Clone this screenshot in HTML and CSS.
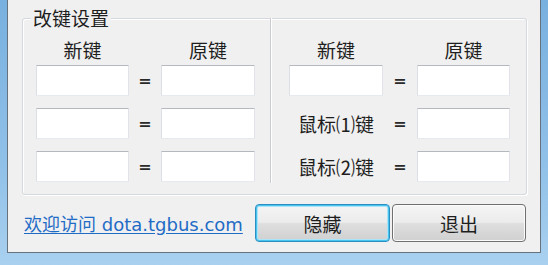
FILE: index.html
```html
<!DOCTYPE html>
<html lang="zh-CN">
<head>
<meta charset="utf-8">
<title>改键设置</title>
<link rel="stylesheet" href="styles.css">
</head>
<body>
<div class="window">
  <fieldset class="group">
    <legend class="group-title">改键设置</legend>
    <div class="group-body">
      <div class="keymap keymap-left">
        <div class="col-head">新键</div>
        <div></div>
        <div class="col-head">原键</div>
        <input class="keybox" type="text"><span class="eq">=</span><input class="keybox" type="text">
        <input class="keybox" type="text"><span class="eq">=</span><input class="keybox" type="text">
        <input class="keybox" type="text"><span class="eq">=</span><input class="keybox" type="text">
      </div>
      <div class="divider"></div>
      <div class="keymap keymap-right">
        <div class="col-head">新键</div>
        <div></div>
        <div class="col-head">原键</div>
        <input class="keybox" type="text"><span class="eq">=</span><input class="keybox" type="text">
        <div class="mouse-label">鼠标⑴键</div><span class="eq">=</span><input class="keybox" type="text">
        <div class="mouse-label">鼠标⑵键</div><span class="eq">=</span><input class="keybox" type="text">
      </div>
    </div>
  </fieldset>
  <div class="footer">
    <a class="site-link" href="#">欢迎访问 dota.tgbus.com</a>
    <div class="buttons">
      <button class="btn btn-default" type="button">隐藏</button>
      <button class="btn" type="button">退出</button>
    </div>
  </div>
</div>
</body>
</html>
```

FILE: styles.css
```css
html, body {
  margin: 0;
  padding: 0;
}
body {
  width: 548px;
  height: 265px;
  overflow: hidden;
  background: linear-gradient(180deg, #78b0df 0%, #8fc0e8 60%, #a9d0ef 100%);
  font-family: "Noto Sans CJK SC", "Noto Sans", sans-serif;
  color: #1e1e1e;
}
.window {
  box-sizing: border-box;
  margin-left: 7px;
  width: 534px;
  height: 253px;
  background: #f0f0f0;
  border: 1px solid #66727e;
  border-top: none;
  padding: 7px 13px 0 14px;
  display: flex;
  flex-direction: column;
}
.group {
  box-sizing: border-box;
  margin: 0;
  padding: 0;
  height: 188px;
  border: 1px solid #d3d9de;
  border-radius: 3px;
  box-shadow: inset 1px 1px 0 #ffffff, 1px 1px 0 #ffffff;
}
.group-title {
  margin-left: 8px;
  padding: 0 2px;
  font-size: 19px;
  line-height: 22px;
  background: #f0f0f0;
}
.group-body {
  display: flex;
  padding: 2px 0 0 13px;
}
.keymap {
  display: grid;
  grid-template-rows: 22px 31px 31px 31px;
  row-gap: 12px;
  align-items: center;
}
.keymap-left {
  grid-template-columns: 93px 32px 94px;
}
.keymap-right {
  grid-template-columns: 94px 34px 93px;
}
.col-head {
  align-self: end;
  margin-bottom: -8px;
  font-size: 19px;
  line-height: 22px;
  text-align: center;
}
.keybox {
  box-sizing: border-box;
  width: 100%;
  height: 31px;
  margin: 0;
  padding: 0 3px;
  background: #ffffff;
  border: 1px solid;
  border-color: #b5b8be #e2e3ea #e6eaef #dbdfe6;
  border-radius: 1px;
  outline: none;
}
.eq {
  text-align: center;
  font-family: "DejaVu Sans", sans-serif;
  font-weight: bold;
  font-size: 16px;
  line-height: 31px;
  color: #2a2a2a;
}
.mouse-label {
  font-size: 19px;
  line-height: 31px;
  text-align: center;
  white-space: nowrap;
}
.divider {
  align-self: stretch;
  width: 0;
  margin: -13px 17px -1px 15px;
  border-left: 1px solid #c9cdd1;
  border-right: 1px solid #ffffff;
}
.footer {
  display: flex;
  align-items: center;
  margin-top: 9px;
}
.site-link {
  margin-left: 2px;
  margin-top: 4px;
  font-family: "DejaVu Sans", "Noto Sans CJK SC", sans-serif;
  font-size: 18px;
  line-height: 22px;
  color: #1f6cc6;
  text-decoration: underline;
  text-underline-offset: 2px;
}
.buttons {
  display: flex;
  gap: 2px;
  margin-left: auto;
  margin-right: 1px;
}
.btn {
  box-sizing: border-box;
  width: 134px;
  height: 38px;
  margin: 0;
  padding: 0;
  font-family: "Noto Sans CJK SC", sans-serif;
  font-size: 19px;
  color: #1e1e1e;
  border: 1px solid #707070;
  border-radius: 4px;
  background: linear-gradient(180deg, #f4f4f4 0%, #ececec 48%, #dedede 52%, #d0d0d0 100%);
  box-shadow: inset 0 0 0 1px #fbfbfb;
}
.btn-default {
  width: 135px;
  border-color: #2b8fc4;
  box-shadow: inset 0 0 0 1px #48c3ee, inset 0 0 0 2px #a9e4f8;
}
```
